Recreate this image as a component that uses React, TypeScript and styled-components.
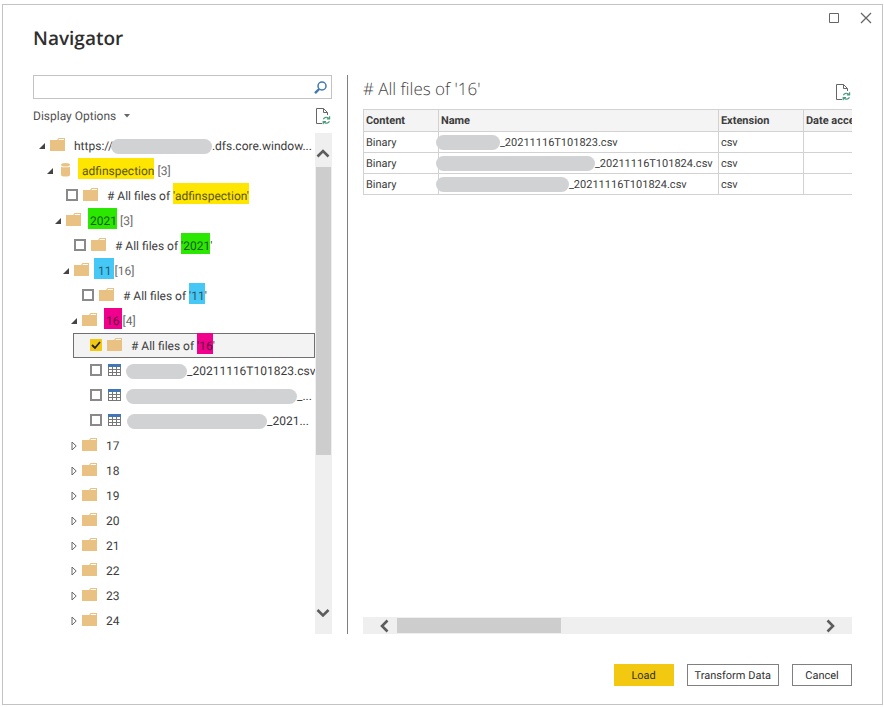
import React, { useState } from "react";
import styled, { createGlobalStyle, css } from "styled-components";

const GlobalStyle = createGlobalStyle`
  *, *::before, *::after { box-sizing: border-box; }
  body {
    margin: 0;
    background: #fff;
    color: #3c3c3c;
    font-family: Roboto, "Open Sans", sans-serif;
    font-size: 12px;
    text-rendering: geometricPrecision;
  }
  button, input { font: inherit; color: inherit; text-rendering: inherit; }
`;

const Page = styled.div`
  display: flex;
  min-height: 100vh;
  padding: 4px 1px 2px 2px;
`;

const Dialog = styled.main`
  flex: 1;
  min-width: 0;
  display: flex;
  flex-direction: column;
  border: 1px solid #c3c3c3;
`;

const TitleBar = styled.header`
  display: flex;
  justify-content: space-between;
  align-items: flex-start;
  height: 70px;
  padding: 0 8px 0 30px;
`;

const Title = styled.h1`
  margin: 19px 0 0;
  font-family: "Open Sans", "Noto Sans", sans-serif;
  font-size: 19px;
  line-height: 28px;
  font-weight: 600;
  color: #2f2f2f;
`;

const WindowControls = styled.div`
  display: flex;
  gap: 16px;
  padding-top: 4px;
`;

const IconButton = styled.button`
  display: grid;
  place-items: center;
  flex: none;
  width: 16px;
  height: 18px;
  padding: 0;
  border: 0;
  background: transparent;
  cursor: pointer;
`;

const Body = styled.div`
  flex: 1;
  display: grid;
  grid-template-columns: minmax(0, 11fr) 1px minmax(0, 18fr);
  column-gap: 15px;
  padding: 0 30px;
`;

const Divider = styled.div`
  background: #808080;
`;

const Column = styled.section`
  display: flex;
  flex-direction: column;
  min-width: 0;
`;

const SearchBox = styled.label`
  display: flex;
  align-items: center;
  height: 24px;
  padding-right: 4px;
  border: 1px solid #c3c3c3;
`;

const SearchInput = styled.input`
  flex: 1;
  min-width: 0;
  height: 100%;
  padding: 0 6px;
  border: 0;
  outline: 0;
  background: transparent;
`;

const OptionsRow = styled.div`
  display: flex;
  align-items: center;
  justify-content: space-between;
  height: 34px;
  padding-right: 1px;
`;

const MenuButton = styled.button`
  display: flex;
  align-items: center;
  gap: 8px;
  padding: 0;
  border: 0;
  background: transparent;
  color: #505050;
  cursor: pointer;
`;

const TreeFrame = styled.div`
  display: flex;
  flex: 1;
`;

const Tree = styled.ul`
  flex: 1;
  min-width: 0;
  margin: 0;
  padding: 0;
  list-style: none;
`;

const rowBase = css`
  display: flex;
  align-items: center;
  height: 25px;
  white-space: nowrap;
  border: 1px solid transparent;
`;

const BranchRow = styled.li<{ $level: number }>`
  ${rowBase}
  margin-left: ${(p) => p.$level * 8}px;
  padding-left: 4px;
`;

const LeafRow = styled.li<{ $level: number; $selected?: boolean }>`
  ${rowBase}
  margin-left: ${(p) => p.$level * 8}px;
  padding-left: 16px;
  ${(p) => p.$selected && css`
    border-color: #707070;
    background: #f3f3f3;
  `}
`;

const Expander = styled.button`
  display: grid;
  place-items: center;
  flex: none;
  width: 8px;
  height: 16px;
  margin-right: 4px;
  padding: 0;
  border: 0;
  background: transparent;
  cursor: pointer;
`;

const LeafLabel = styled.label`
  display: flex;
  align-items: center;
`;

const Checkbox = styled.input`
  appearance: none;
  flex: none;
  width: 12px;
  height: 12px;
  margin: 0 5px 2px 0;
  border: 2px solid #8a8a8a;
  background: #fff;
  &:checked {
    border: 0;
    background: #f2c811 url("data:image/svg+xml,%3Csvg xmlns='http://www.w3.org/2000/svg' viewBox='0 0 12 12'%3E%3Cpath d='M2 6l3 3 5-6' fill='none' stroke='%23222' stroke-width='1.8'/%3E%3C/svg%3E") center / 12px;
  }
`;

const IconSlot = styled.span`
  display: flex;
  align-items: center;
  flex: none;
  width: 16px;
  height: 16px;
  margin: 0 8px 1px 0;
`;

const NodeText = styled.span`
  padding-top: 1px;
  line-height: 24px;
`;

const Count = styled.span`
  color: #6a6a6a;
`;

const marks = {
  yellow: { fill: "#ffe600", ink: "#5c5410" },
  green: { fill: "#2ae800", ink: "#1f5a12" },
  blue: { fill: "#45c8f5", ink: "#28596c" },
  pink: { fill: "#f0008c", ink: "#5f0a3c" },
};

const Mark = styled.mark<{ $tone: keyof typeof marks; $lead?: number }>`
  margin-left: ${(p) => -(p.$lead ?? 0)}px;
  padding: 6px 0 1px ${(p) => p.$lead ?? 0}px;
  background: ${(p) => marks[p.$tone].fill};
  color: ${(p) => marks[p.$tone].ink};
`;

const Redaction = styled.span<{ $width: number; $lead?: number }>`
  display: inline-block;
  vertical-align: middle;
  width: ${(p) => p.$width}px;
  height: 15px;
  margin-left: ${(p) => -(p.$lead ?? 0)}px;
  border-radius: 8px;
  background: #d0d2d4;
`;

const VScroll = styled.div`
  display: flex;
  flex-direction: column;
  align-items: center;
  width: 17px;
  padding: 12px 1px;
  background: #efefef;
`;

const VTrack = styled.div`
  flex: 1;
  align-self: stretch;
  padding: 4px 0 0;
`;

const VThumb = styled.div`
  height: 66%;
  background: #cdcdcd;
`;

const HScroll = styled.div`
  display: flex;
  align-items: center;
  height: 17px;
  margin-top: auto;
  padding: 0 14px;
  background: #efefef;
`;

const HTrack = styled.div`
  flex: 1;
  height: 15px;
  padding: 0 4px;
`;

const HThumb = styled.div`
  width: 39%;
  height: 100%;
  background: #cdcdcd;
`;

const PreviewHead = styled.div`
  display: flex;
  align-items: center;
  justify-content: space-between;
  height: 34px;
  padding-right: 1px;
`;

const PreviewTitle = styled.h2`
  margin: 0;
  padding-bottom: 6px;
  font-family: "Open Sans", "Noto Sans", sans-serif;
  font-size: 17px;
  font-weight: 300;
  line-height: 28px;
  color: #444;
`;

const TableFrame = styled.div`
  overflow: hidden;
`;

const Table = styled.table`
  width: 560px;
  table-layout: fixed;
  border-collapse: collapse;
  font-size: 11px;
  line-height: 16px;
`;

const Col = styled.col<{ $width: number }>`
  width: ${(p) => p.$width}px;
`;

const Th = styled.th`
  height: 22px;
  padding: 0 2px;
  border: 1px solid #d2d2d2;
  background: #f4f4f4;
  text-align: left;
  font-weight: 700;
`;

const Td = styled.td`
  height: 21px;
  padding: 1px 2px 0;
  border: 1px solid #d2d2d2;
  white-space: nowrap;
`;

const Footer = styled.footer`
  display: flex;
  justify-content: flex-end;
  gap: 13px;
  padding: 30px 30px 18px;
`;

const Button = styled.button<{ $primary?: boolean }>`
  min-width: 60px;
  height: 22px;
  padding: 1px 7px 0;
  border: 1px solid ${(p) => (p.$primary ? "#f2c811" : "#808080")};
  background: ${(p) => (p.$primary ? "#f2c811" : "#fff")};
  color: #333;
  font-size: 11px;
  line-height: 16px;
  cursor: pointer;
`;

const FolderIcon = () => (
  <svg width="16" height="14" viewBox="0 0 16 14" aria-hidden="true">
    <path d="M0 2h7l1.5-2H15v13H0z" fill="#e9c283" />
    <path d="M9 1h5v1H8.4z" fill="#fff" />
  </svg>
);

const DatabaseIcon = () => (
  <svg width="16" height="14" viewBox="-3 0 16 14" aria-hidden="true">
    <path d="M0 3.4c1 1.2 8 1.2 9 0V12c0 2-9 2-9 0z" fill="#e9c283" />
    <ellipse cx="4.5" cy="1.8" rx="4.5" ry="1.8" fill="#e9c283" />
  </svg>
);

const SheetIcon = () => (
  <svg width="14" height="12" viewBox="-1 0 14 12" aria-hidden="true">
    <path d="M0 0h13v12H0z" fill="#777" />
    <path d="M0 0h13v3H0z" fill="#3f78b5" />
    <path d="M1 3h3v2H1zM5 3h3v2H5zM9 3h3v2H9zM1 6h3v2H1zM5 6h3v2H5zM9 6h3v2H9zM1 9h3v2H1zM5 9h3v2H5zM9 9h3v2H9z" fill="#fff" />
  </svg>
);

const SearchIcon = () => (
  <svg width="13" height="13" viewBox="0 0 13 13" fill="none" stroke="#3f78b5" aria-hidden="true">
    <circle cx="8" cy="5" r="4" strokeWidth="1.5" />
    <path d="M5.2 8L1 12.2" strokeWidth="2.4" />
  </svg>
);

const RefreshPageIcon = () => (
  <svg width="16" height="18" viewBox="0 0 16 18" fill="none" aria-hidden="true">
    <path d="M7 16.5H1.5V1.5h7l4 4V8M8.5 1.5v4h4" stroke="#666" />
    <path d="M8.4 12.2c.7-2.2 3.9-2.6 5.4-.9M14.6 9.2v2.7h-2.8M14.4 14.2c-.7 2.2-3.9 2.6-5.4.9M8.2 17.3v-2.7H11" stroke="#4a9c7d" strokeWidth="1.2" />
  </svg>
);

const ArrowIcon = ({ open }: { open: boolean }) =>
  open ? (
    <svg width="6" height="6" viewBox="0 0 6 6" aria-hidden="true">
      <path d="M6 0v6H0z" fill="#444" />
    </svg>
  ) : (
    <svg width="6" height="10" viewBox="0 0 6 10" aria-hidden="true">
      <path d="M1 1v8L5.2 5z" fill="#fff" stroke="#666" />
    </svg>
  );

const chevrons = {
  up: "M1.5 9.5L7 4l5.5 5.5",
  down: "M1.5 4L7 9.5l5.5-5.5",
  left: "M9.5 1.5L4 7l5.5 5.5",
  right: "M4.5 1.5L10 7l-5.5 5.5",
};

const Chevron = ({ dir }: { dir: keyof typeof chevrons }) => (
  <svg width="14" height="14" viewBox="0 0 14 14" aria-hidden="true">
    <path d={chevrons[dir]} fill="none" stroke="#5c5c5c" strokeWidth="2.6" />
  </svg>
);

type BranchProps = {
  level: number;
  name: string;
  open?: boolean;
  icon?: React.ReactNode;
  children: React.ReactNode;
};

const Branch = ({ level, name, open = false, icon = <FolderIcon />, children }: BranchProps) => (
  <BranchRow $level={level}>
    <Expander type="button" aria-label={`Toggle ${name}`} aria-expanded={open}>
      <ArrowIcon open={open} />
    </Expander>
    <IconSlot>{icon}</IconSlot>
    <NodeText>{children}</NodeText>
  </BranchRow>
);

type LeafProps = {
  level: number;
  checked?: boolean;
  icon?: React.ReactNode;
  children: React.ReactNode;
};

const Leaf = ({ level, checked = false, icon = <FolderIcon />, children }: LeafProps) => {
  const [on, setOn] = useState(checked);
  return (
    <LeafRow $level={level} $selected={checked}>
      <LeafLabel>
        <Checkbox type="checkbox" checked={on} onChange={() => setOn(!on)} />
        <IconSlot>{icon}</IconSlot>
        <NodeText>{children}</NodeText>
      </LeafLabel>
    </LeafRow>
  );
};

const closedFolders = ["17", "18", "19", "20", "21", "22", "23", "24"];

const files = [
  { hidden: 64, suffix: "_20211116T101823.csv" },
  { hidden: 159, suffix: "_20211116T101824.csv" },
  { hidden: 133, suffix: "_20211116T101824.csv" },
];

export default function App() {
  return (
    <>
      <GlobalStyle />
      <Page>
        <Dialog>
          <TitleBar>
            <Title>Navigator</Title>
            <WindowControls>
              <IconButton type="button" aria-label="Maximize">
                <svg width="10" height="10" viewBox="0 0 10 10" aria-hidden="true">
                  <path d="M.5.5h9v9h-9z" fill="none" stroke="#666" />
                </svg>
              </IconButton>
              <IconButton type="button" aria-label="Close">
                <svg width="12" height="12" viewBox="0 0 12 12" aria-hidden="true">
                  <path d="M1 1l10 10M11 1L1 11" stroke="#666" strokeWidth="1.3" />
                </svg>
              </IconButton>
            </WindowControls>
          </TitleBar>
          <Body>
            <Column>
              <SearchBox>
                <SearchInput type="text" aria-label="Search" />
                <SearchIcon />
              </SearchBox>
              <OptionsRow>
                <MenuButton type="button">
                  Display Options
                  <svg width="6" height="4" viewBox="0 0 6 4" aria-hidden="true">
                    <path d="M0 0h6L3 3.5z" fill="#666" />
                  </svg>
                </MenuButton>
                <IconButton type="button" aria-label="Refresh tree">
                  <RefreshPageIcon />
                </IconButton>
              </OptionsRow>
              <TreeFrame>
                <Tree>
                  <Branch level={0} name="storage account" open>
                    https://
                    <Redaction $width={101} $lead={2} />
                    .dfs.core.window...
                  </Branch>
                  <Branch level={1} name="adfinspection" open icon={<DatabaseIcon />}>
                    <Mark $tone="yellow" $lead={4}>adfinspection</Mark> <Count>[3]</Count>
                  </Branch>
                  <Leaf level={2}>
                    # All files of <Mark $tone="yellow">'adfinspection'</Mark>
                  </Leaf>
                  <Branch level={2} name="2021" open>
                    <Mark $tone="green" $lead={2}>2021</Mark> <Count>[3]</Count>
                  </Branch>
                  <Leaf level={3}>
                    # All files of <Mark $tone="green">'2021</Mark>'
                  </Leaf>
                  <Branch level={3} name="11" open>
                    <Mark $tone="blue" $lead={4}>11 </Mark>
                    <Count>[16]</Count>
                  </Branch>
                  <Leaf level={4}>
                    # All files of <Mark $tone="blue">'11</Mark>'
                  </Leaf>
                  <Branch level={4} name="16" open>
                    <Mark $tone="pink" $lead={2}>16 </Mark>
                    <Count>[4]</Count>
                  </Branch>
                  <Leaf level={5} checked>
                    # All files of <Mark $tone="pink">'16</Mark>'
                  </Leaf>
                  <Leaf level={5} icon={<SheetIcon />}>
                    <Redaction $width={61} $lead={5} />
                    _20211116T101823.csv
                  </Leaf>
                  <Leaf level={5} icon={<SheetIcon />}>
                    <Redaction $width={171} $lead={5} />
                    _...
                  </Leaf>
                  <Leaf level={5} icon={<SheetIcon />}>
                    <Redaction $width={140} $lead={4} />
                    _2021...
                  </Leaf>
                  {closedFolders.map((name) => (
                    <Branch key={name} level={4} name={name}>{name}</Branch>
                  ))}
                </Tree>
                <VScroll>
                  <IconButton type="button" aria-label="Scroll up"><Chevron dir="up" /></IconButton>
                  <VTrack><VThumb /></VTrack>
                  <IconButton type="button" aria-label="Scroll down"><Chevron dir="down" /></IconButton>
                </VScroll>
              </TreeFrame>
            </Column>
            <Divider />
            <Column>
              <PreviewHead>
                <PreviewTitle># All files of '16'</PreviewTitle>
                <IconButton type="button" aria-label="Refresh preview">
                  <RefreshPageIcon />
                </IconButton>
              </PreviewHead>
              <TableFrame>
                <Table>
                  <colgroup>
                    <Col $width={75} />
                    <Col $width={280} />
                    <Col $width={85} />
                    <Col $width={120} />
                  </colgroup>
                  <thead>
                    <tr>
                      <Th>Content</Th>
                      <Th>Name</Th>
                      <Th>Extension</Th>
                      <Th>Date accessed</Th>
                    </tr>
                  </thead>
                  <tbody>
                    {files.map((file, i) => (
                      <tr key={i}>
                        <Td>Binary</Td>
                        <Td>
                          <Redaction $width={file.hidden} $lead={5} />
                          {file.suffix}
                        </Td>
                        <Td>csv</Td>
                        <Td />
                      </tr>
                    ))}
                  </tbody>
                </Table>
              </TableFrame>
              <HScroll>
                <IconButton type="button" aria-label="Scroll left"><Chevron dir="left" /></IconButton>
                <HTrack><HThumb /></HTrack>
                <IconButton type="button" aria-label="Scroll right"><Chevron dir="right" /></IconButton>
              </HScroll>
            </Column>
          </Body>
          <Footer>
            <Button type="button" $primary>Load</Button>
            <Button type="button">Transform Data</Button>
            <Button type="button">Cancel</Button>
          </Footer>
        </Dialog>
      </Page>
    </>
  );
}
